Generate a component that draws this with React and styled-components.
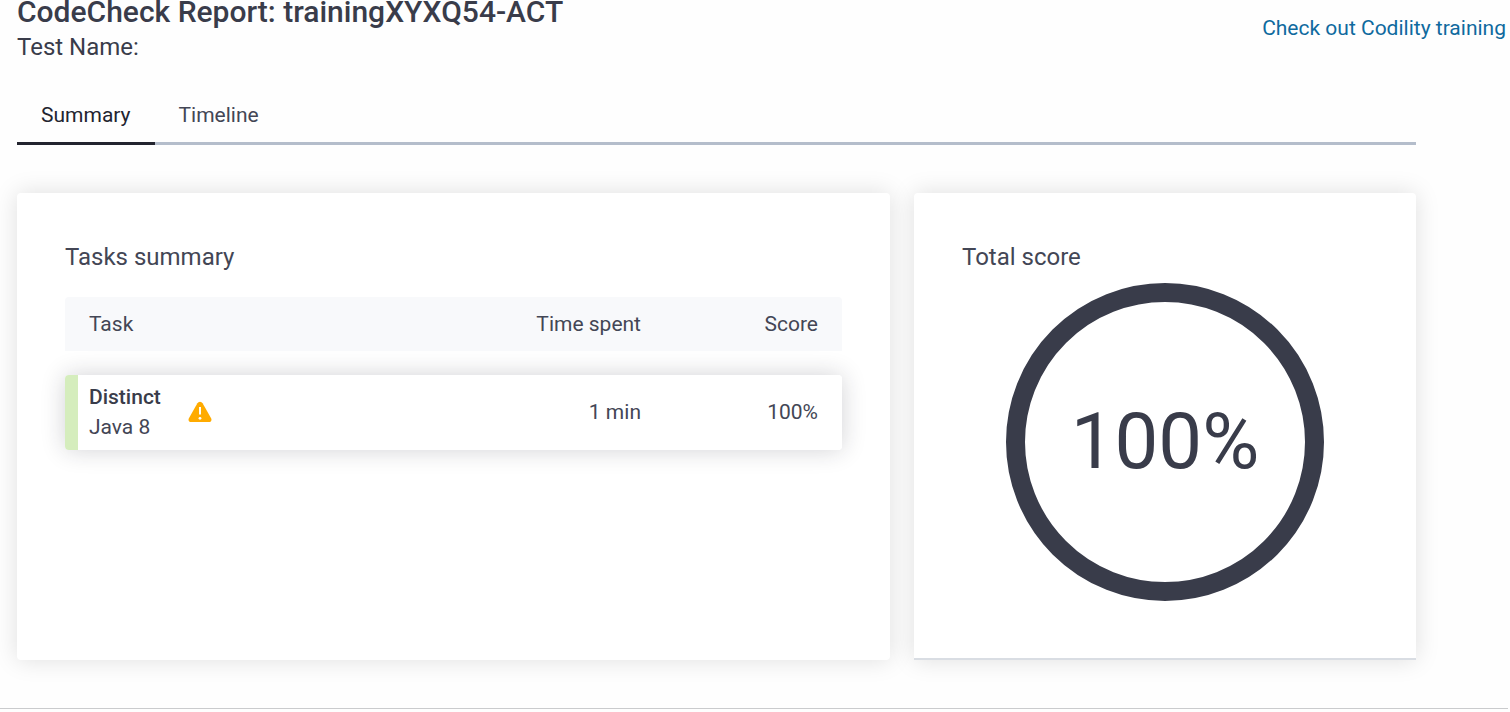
import React from "react";
import styled, { createGlobalStyle } from "styled-components";

const GlobalStyle = createGlobalStyle`
  *, *::before, *::after { box-sizing: border-box; }
  body {
    margin: 0;
    background: #fefefe;
    color: #393c4a;
    font-family: Roboto, "Liberation Sans", sans-serif;
    font-size: 21px;
    line-height: 30px;
  }
`;

const Page = styled.div`
  padding-right: 2px;
`;

const Header = styled.header`
  display: flex;
  justify-content: space-between;
  align-items: flex-start;
  padding: 0 2px 0 17px;
`;

const Title = styled.h1`
  margin: 0;
  font-size: 30px;
  line-height: 24px;
  font-weight: 500;
`;

const TestName = styled.p`
  margin: 8px 0 0;
  font-size: 24px;
  line-height: 30px;
`;

const TrainingLink = styled.a`
  margin-top: 13px;
  color: #0f6a9e;
  text-decoration: none;
  white-space: nowrap;
`;

const Content = styled.main`
  padding: 24px 92px 48px 17px;
`;

const TabList = styled.div`
  display: flex;
  box-shadow: inset 0 -3px #b4bdcb;
`;

const Tab = styled.button`
  padding: 14px 24px 12px;
  border: 0;
  border-bottom: 3px solid ${(p) => (p.$active ? "#23242f" : "transparent")};
  background: none;
  color: ${(p) => (p.$active ? "#23242f" : "#434655")};
  font: inherit;
`;

const Cards = styled.div`
  display: grid;
  grid-template-columns: 873fr 502fr;
  gap: 24px;
  margin-top: 48px;
`;

const Card = styled.section`
  padding: 48px;
  border-radius: ${(p) => (p.$ruled ? "4px 4px 0 0" : "4px")};
  border-bottom: ${(p) => (p.$ruled ? "2px solid #d9dde3" : "0")};
  background: #fff;
  box-shadow: 0 0 24px rgba(0, 0, 0, 0.13);
`;

const CardTitle = styled.h2`
  margin: 0;
  color: #434655;
  font-size: 24px;
  line-height: 32px;
  font-weight: 400;
`;

const TaskTable = styled.table`
  width: 100%;
  border-collapse: separate;
  border-spacing: 0 24px;
  color: #434655;
`;

const HeadCell = styled.th`
  width: ${(p) => p.$width};
  height: 54px;
  padding: 0 24px;
  background: #f8f9fb;
  font-weight: 400;
  text-align: ${(p) => (p.$end ? "right" : "left")};
  &:first-child { border-top-left-radius: 4px; }
  &:last-child { border-top-right-radius: 4px; }
`;

const TaskRow = styled.tr`
  border-radius: 4px;
  box-shadow: 0 0 24px rgba(30, 32, 45, 0.2);
`;

const Cell = styled.td`
  height: 75px;
  padding: 0 24px 2px;
  background: #fff;
  text-align: ${(p) => (p.$end ? "right" : "left")};
  &:first-child {
    padding-left: 11px;
    border-left: 13px solid #d5edbd;
    border-radius: 4px 0 0 4px;
  }
  &:last-child { border-radius: 0 4px 4px 0; }
`;

const Task = styled.div`
  display: flex;
  align-items: center;
  gap: 27px;
`;

const TaskName = styled.strong`
  display: block;
  color: #393c4a;
  font-weight: 500;
`;

const Language = styled.span`
  display: block;
`;

const WarningIcon = styled.svg`
  width: 24px;
  height: 22px;
`;

const ScoreRing = styled.div`
  display: flex;
  align-items: center;
  justify-content: center;
  width: 318px;
  height: 318px;
  margin: 10px auto 9px;
  border: 19px solid #393c4a;
  border-radius: 50%;
  font-size: 78px;
  line-height: 96px;
`;

const Footer = styled.footer`
  border-top: 1px solid #cacbcd;
`;

const tasks = [{ name: "Distinct", language: "Java 8", time: "1 min", score: "100%" }];

export default function App() {
  return (
    <Page>
      <GlobalStyle />
      <Header>
        <div>
          <Title>CodeCheck Report: trainingXYXQ54-ACT</Title>
          <TestName>Test Name:</TestName>
        </div>
        <TrainingLink href="#training">Check out Codility training</TrainingLink>
      </Header>
      <Content>
        <TabList role="tablist">
          <Tab type="button" role="tab" aria-selected="true" $active>Summary</Tab>
          <Tab type="button" role="tab" aria-selected="false">Timeline</Tab>
        </TabList>
        <Cards>
          <Card>
            <CardTitle>Tasks summary</CardTitle>
            <TaskTable>
              <thead>
                <tr>
                  <HeadCell scope="col">Task</HeadCell>
                  <HeadCell scope="col" $width="25%" $end>Time spent</HeadCell>
                  <HeadCell scope="col" $width="177px" $end>Score</HeadCell>
                </tr>
              </thead>
              <tbody>
                {tasks.map((task) => (
                  <TaskRow key={task.name}>
                    <Cell>
                      <Task>
                        <div>
                          <TaskName>{task.name}</TaskName>
                          <Language>{task.language}</Language>
                        </div>
                        <WarningIcon viewBox="0 0 24 22" aria-hidden="true">
                          <path d="M9.4 2.2a3 3 0 0 1 5.2 0l8.5 15.1c1 1.8-.2 3.7-2.1 3.700H3C1.100 21-.1 19.100.9 17.300Z" fill="#ffab00" />
                          <path d="M12 6v7.500" stroke="#fff" strokeWidth="2" />
                          <circle cx="12" cy="17.300" r="1.400" fill="#fff" />
                        </WarningIcon>
                      </Task>
                    </Cell>
                    <Cell $end>{task.time}</Cell>
                    <Cell $end>{task.score}</Cell>
                  </TaskRow>
                ))}
              </tbody>
            </TaskTable>
          </Card>
          <Card $ruled>
            <CardTitle>Total score</CardTitle>
            <ScoreRing>100%</ScoreRing>
          </Card>
        </Cards>
      </Content>
      <Footer />
    </Page>
  );
}
